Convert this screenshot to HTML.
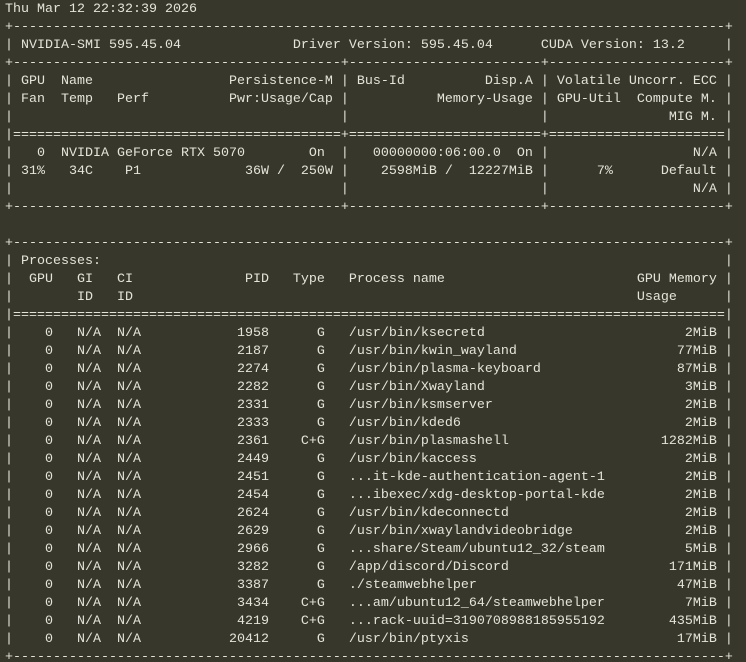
<!DOCTYPE html>
<html><head><meta charset="utf-8"><style>
html,body{margin:0;padding:0;background:#37372b;width:746px;height:662px;overflow:hidden}
pre{margin:0;padding:0 0 0 5px;position:relative;top:1px;font-family:"Liberation Mono","DejaVu Sans Mono",monospace;font-size:13.33px;line-height:18px;color:#e4e4da;white-space:pre}
</style></head><body><pre>Thu Mar 12 22:32:39 2026
+-----------------------------------------------------------------------------------------+
| NVIDIA-SMI 595.45.04              Driver Version: 595.45.04      CUDA Version: 13.2     |
+-----------------------------------------+------------------------+----------------------+
| GPU  Name                 Persistence-M | Bus-Id          Disp.A | Volatile Uncorr. ECC |
| Fan  Temp   Perf          Pwr:Usage/Cap |           Memory-Usage | GPU-Util  Compute M. |
|                                         |                        |               MIG M. |
|=========================================+========================+======================|
|   0  NVIDIA GeForce RTX 5070        On  |   00000000:06:00.0  On |                  N/A |
| 31%   34C    P1             36W /  250W |    2598MiB /  12227MiB |      7%      Default |
|                                         |                        |                  N/A |
+-----------------------------------------+------------------------+----------------------+

+-----------------------------------------------------------------------------------------+
| Processes:                                                                              |
|  GPU   GI   CI              PID   Type   Process name                        GPU Memory |
|        ID   ID                                                               Usage      |
|=========================================================================================|
|    0   N/A  N/A            1958      G   /usr/bin/ksecretd                         2MiB |
|    0   N/A  N/A            2187      G   /usr/bin/kwin_wayland                    77MiB |
|    0   N/A  N/A            2274      G   /usr/bin/plasma-keyboard                 87MiB |
|    0   N/A  N/A            2282      G   /usr/bin/Xwayland                         3MiB |
|    0   N/A  N/A            2331      G   /usr/bin/ksmserver                        2MiB |
|    0   N/A  N/A            2333      G   /usr/bin/kded6                            2MiB |
|    0   N/A  N/A            2361    C+G   /usr/bin/plasmashell                   1282MiB |
|    0   N/A  N/A            2449      G   /usr/bin/kaccess                          2MiB |
|    0   N/A  N/A            2451      G   ...it-kde-authentication-agent-1          2MiB |
|    0   N/A  N/A            2454      G   ...ibexec/xdg-desktop-portal-kde          2MiB |
|    0   N/A  N/A            2624      G   /usr/bin/kdeconnectd                      2MiB |
|    0   N/A  N/A            2629      G   /usr/bin/xwaylandvideobridge              2MiB |
|    0   N/A  N/A            2966      G   ...share/Steam/ubuntu12_32/steam          5MiB |
|    0   N/A  N/A            3282      G   /app/discord/Discord                    171MiB |
|    0   N/A  N/A            3387      G   ./steamwebhelper                         47MiB |
|    0   N/A  N/A            3434    C+G   ...am/ubuntu12_64/steamwebhelper          7MiB |
|    0   N/A  N/A            4219    C+G   ...rack-uuid=3190708988185955192        435MiB |
|    0   N/A  N/A           20412      G   /usr/bin/ptyxis                          17MiB |
+-----------------------------------------------------------------------------------------+</pre></body></html>
